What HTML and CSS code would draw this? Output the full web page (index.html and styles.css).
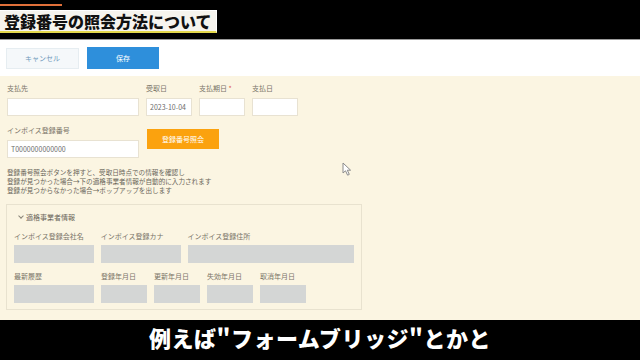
FILE: index.html
```html
<!DOCTYPE html>
<html lang="ja">
<head>
<meta charset="utf-8">
<title>登録番号の照会方法について</title>
<link rel="stylesheet" href="styles.css">
</head>
<body>
    <div class="topband">
        <div class="accent"></div>
        <h1 class="title">登録番号の照会方法について</h1>
    </div>
    <div class="toolbar">
        <button class="btn cancel">キャンセル</button>
        <button class="btn save">保存</button>
    </div>
    <div class="form">
        <div class="row">
            <div class="field w-wide">
                <label>支払先</label>
                <div class="input"></div>
            </div>
            <div class="field w-date">
                <label>受取日</label>
                <div class="input">2023-10-04</div>
            </div>
            <div class="field w-date">
                <label>支払期日 <span class="req">*</span></label>
                <div class="input"></div>
            </div>
            <div class="field w-date">
                <label>支払日</label>
                <div class="input"></div>
            </div>
        </div>
        <div class="row row2">
            <div class="field w-wide">
                <label>インボイス登録番号</label>
                <div class="input">T0000000000000</div>
            </div>
            <button class="btn lookup">登録番号照会</button>
        </div>
        <!-- 照会ボタンの説明 -->
        <p class="notes">
            登録番号照会ボタンを押すと、受取日時点での情報を確認し<br>
            登録が見つかった場合→下の適格事業者情報が自動的に入力されます<br>
            登録が見つからなかった場合→ポップアップを出します
        </p>
        <div class="section">
            <div class="section-head"><span class="chev"></span>適格事業者情報</div>
            <div class="row">
                <div class="field w-box">
                    <label>インボイス登録会社名</label>
                    <div class="fill"></div>
                </div>
                <div class="field w-box">
                    <label>インボイス登録カナ</label>
                    <div class="fill"></div>
                </div>
                <div class="field w-addr">
                    <label>インボイス登録住所</label>
                    <div class="fill"></div>
                </div>
            </div>
            <div class="row row3">
                <div class="field w-box">
                    <label>最新履歴</label>
                    <div class="fill"></div>
                </div>
                <div class="field w-date">
                    <label>登録年月日</label>
                    <div class="fill"></div>
                </div>
                <div class="field w-date">
                    <label>更新年月日</label>
                    <div class="fill"></div>
                </div>
                <div class="field w-date">
                    <label>失効年月日</label>
                    <div class="fill"></div>
                </div>
                <div class="field w-date">
                    <label>取消年月日</label>
                    <div class="fill"></div>
                </div>
            </div>
        </div>
        <label class="after">支払額</label>
        <svg class="cursor" width="11" height="15" viewBox="0 0 11 15">
            <path d="M1 1 L1 11 L3.5 8.8 L5.6 13.2 L7.3 12.4 L5.3 8.2 L8.6 8.2 Z" fill="#fff" stroke="#8a8a8a" stroke-width="1"/>
        </svg>
    </div>
    <div class="subtitle">例えば"フォームブリッジ"とかと</div>
</body>
</html>
```

FILE: styles.css
```css
body{
    margin: 0;
    width: 640px;
    height: 360px;
    overflow: hidden;
    font-family: "Noto Sans CJK JP", "Noto Sans", sans-serif;
    background: #000;
}
.topband{
    height: 39px;
    background: #000;
    border-bottom: 1px solid #9a9a9a;
    padding-top: 4px;
    box-sizing: border-box;
    height: 40px;
}
.accent{
    width: 62px;
    height: 2px;
    background: #e0703a;
}
.title{
    margin: 4px 0 0 0;
    width: 212px;
    height: 20px;
    padding-left: 4px;
    background: #f6f4ee;
    border: 1px solid #fff;
    border-left: none;
    border-bottom: 2px solid #e4d84c;
    font-size: 16px;
    font-weight: 900;
    line-height: 20px;
    color: #111;
    white-space: nowrap;
}
.toolbar{
    height: 36px;
    background: #fff;
    display: flex;
    align-items: center;
    gap: 8px;
    padding-left: 6px;
}
.btn{
    font-family: inherit;
    font-size: 7px;
    border: none;
    padding: 0;
}
.cancel{
    width: 73px;
    height: 21px;
    background: #f5f8fa;
    border: 1px solid #e6edf1;
    color: #6f98bb;
}
.save{
    width: 72px;
    height: 22px;
    background: #2e8fdb;
    color: #fff;
}
.form{
    position: relative;
    height: 244px;
    overflow: hidden;
    background: #fbf5e2;
    padding: 7px 0 0 7px;
    box-sizing: border-box;
}
.row{
    display: flex;
    gap: 7px;
}
.row2{
    margin-top: 9px;
    gap: 8px;
}
.field label{
    display: block;
    font-size: 7px;
    line-height: 10px;
    color: #7a7468;
    margin-bottom: 5px;
    white-space: nowrap;
}
.req{
    color: #e05a4a;
}
.input{
    height: 18px;
    box-sizing: border-box;
    background: #fff;
    border: 1px solid #e8e2d2;
    font-size: 7px;
    line-height: 16px;
    padding-left: 3px;
    color: #6c6c6c;
    white-space: nowrap;
}
.w-wide{ width: 132px; }
.w-date{ width: 46px; }
.w-box{ width: 80px; }
.w-addr{ width: 167px; }
.lookup{
    width: 72px;
    height: 20px;
    margin-top: 4px;
    background: #fba20e;
    color: #fff;
    font-size: 7px;
}
.notes{
    margin: 10px 0 0 0;
    font-size: 6.6px;
    line-height: 9px;
    color: #6a655a;
}
.section{
    margin: 9px 0 0 -1px;
    width: 356px;
    box-sizing: border-box;
    border: 1px solid #e8e2cf;
    padding: 7px 7px 6px 7px;
}
.section-head{
    font-size: 7px;
    line-height: 10px;
    color: #6a655a;
    padding-left: 4px;
    margin-bottom: 9px;
    display: flex;
    align-items: center;
}
.chev{
    width: 3px;
    height: 3px;
    border-right: 1px solid #8a8478;
    border-bottom: 1px solid #8a8478;
    transform: rotate(45deg);
    margin: -2px 3px 0 1px;
}
.section .field label{
    margin-bottom: 4px;
}
.row3{
    margin-top: 8px;
}
.fill{
    height: 18px;
    background: #d4d6d5;
}
.after{
    display: block;
    margin-top: 11px;
    font-size: 7px;
    line-height: 10px;
    color: #7a7468;
}
.cursor{
    position: absolute;
    left: 342px;
    top: 86px;
}
.subtitle{
    height: 40px;
    background: #000;
    color: #fff;
    text-align: center;
    font-size: 22px;
    font-weight: 900;
    line-height: 34px;
    letter-spacing: 0.5px;
}
```
